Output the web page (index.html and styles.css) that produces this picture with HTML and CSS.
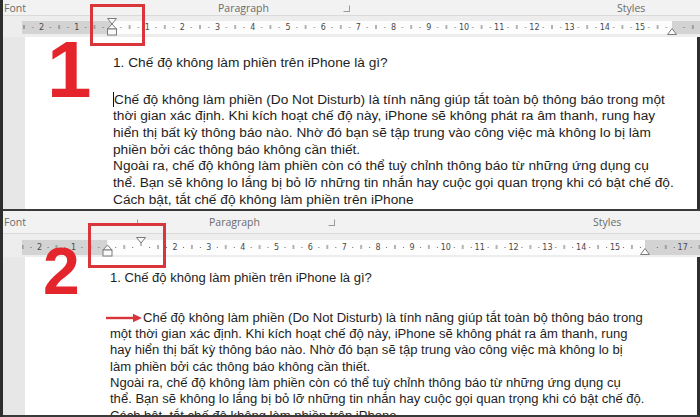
FILE: index.html
```html
<!DOCTYPE html>
<html lang="vi">
<head>
<meta charset="utf-8">
<link rel="stylesheet" href="styles.css">
</head>
<body>
<div class="shot">
  <section class="panel p1">
    <div class="ribbon r1">
      <span class="grp g-font">Font</span>
      <span class="grp g-para">Paragraph<span class="launch"></span></span>
      <span class="grp g-styles">Styles</span>
    </div>
    <div class="rulerzone z1">
      <svg class="ruler" width="700" height="21" viewBox="0 0 700 21">
        <defs>
          <pattern id="tk1" x="112" y="0" width="35.2" height="21" patternUnits="userSpaceOnUse">
            <rect x="8.3" y="11" width="1" height="1" fill="#6a6a6a"/>
            <rect x="17.1" y="9" width="1" height="4" fill="#6a6a6a"/>
            <rect x="25.9" y="11" width="1" height="1" fill="#6a6a6a"/>
          </pattern>
        </defs>
        <rect x="22" y="5" width="90" height="13" fill="#d3d3d3"/>
        <rect x="112" y="5" width="560" height="13" fill="#fdfdfd"/>
        <rect x="672" y="5" width="28" height="13" fill="#d3d3d3"/>
        <rect x="22" y="5" width="678" height="13" fill="url(#tk1)"/>
        <g class="rn" font-size="8" fill="#4a4a4a" text-anchor="middle">
          <text x="41.6" y="14">2</text><text x="76.8" y="14">1</text>
          <text x="147.2" y="14">1</text><text x="182.4" y="14">2</text><text x="217.6" y="14">3</text>
          <text x="252.8" y="14">4</text><text x="288" y="14">5</text><text x="323.2" y="14">6</text>
          <text x="358.4" y="14">7</text><text x="393.6" y="14">8</text><text x="428.8" y="14">9</text>
          <text x="464" y="14">10</text><text x="499.2" y="14">11</text><text x="534.4" y="14">12</text>
          <text x="569.6" y="14">13</text><text x="604.8" y="14">14</text><text x="640" y="14">15</text>
        </g>
        <g fill="#fafafa" stroke="#7a7a7a" stroke-width="1">
          <polygon points="107.5,2.5 116.5,2.5 112,8"/>
          <polygon points="112,8 107.5,13 116.5,13"/>
          <rect x="107.5" y="13" width="9" height="6"/>
          <polygon points="672,12.5 667.5,18.5 676.5,18.5"/>
        </g>
      </svg>
    </div>
    <div class="doc">
      <div class="page pg1">
        <div class="h">1. Chế độ không làm phiền trên iPhone là gì?</div>
        <div class="para">
          <div class="ln"><span class="caret"></span>Chế độ không làm phiền (Do Not Disturb) là tính năng giúp tắt toàn bộ thông báo trong một</div>
          <div class="ln">thời gian xác định. Khi kích hoạt chế độ này, iPhone sẽ không phát ra âm thanh, rung hay</div>
          <div class="ln">hiển thị bất kỳ thông báo nào. Nhờ đó bạn sẽ tập trung vào công việc mà không lo bị làm</div>
          <div class="ln">phiền bởi các thông báo không cần thiết.</div>
          <div class="ln">Ngoài ra, chế độ không làm phiền còn có thể tuỳ chỉnh thông báo từ những ứng dụng cụ</div>
          <div class="ln">thể. Bạn sẽ không lo lắng bị bỏ lỡ những tin nhắn hay cuộc gọi quan trọng khi có bật chế độ.</div>
          <div class="ln">Cách bật, tắt chế độ không làm phiền trên iPhone</div>
        </div>
      </div>
    </div>
    <div class="num n1">1</div>
    <div class="mark m1"></div>
  </section>

  <section class="panel p2">
    <div class="ribbon r2">
      <span class="grp g-font">Font<span class="launch"></span></span>
      <span class="grp g-para">Paragraph<span class="launch"></span></span>
      <span class="grp g-styles">Styles</span>
    </div>
    <div class="rulerzone z2">
      <svg class="ruler" width="700" height="23" viewBox="0 0 700 23">
        <defs>
          <pattern id="tk2" x="107.3" y="0" width="33.85" height="23" patternUnits="userSpaceOnUse">
            <rect x="8" y="13" width="1" height="1" fill="#6a6a6a"/>
            <rect x="16.4" y="11" width="1" height="4" fill="#6a6a6a"/>
            <rect x="24.9" y="13" width="1" height="1" fill="#6a6a6a"/>
          </pattern>
        </defs>
        <rect x="22" y="6" width="85.3" height="15" fill="#d3d3d3"/>
        <rect x="107.3" y="6" width="537.7" height="15" fill="#fdfdfd"/>
        <rect x="645" y="6" width="55" height="15" fill="#d3d3d3"/>
        <rect x="22" y="6" width="678" height="15" fill="url(#tk2)"/>
        <g class="rn" font-size="8" fill="#4a4a4a" text-anchor="middle">
          <text x="39.6" y="16">2</text><text x="73.5" y="16">1</text>
          <text x="175" y="16">2</text><text x="208.9" y="16">3</text>
          <text x="242.7" y="16">4</text><text x="276.6" y="16">5</text><text x="310.4" y="16">6</text>
          <text x="344.3" y="16">7</text><text x="378.1" y="16">8</text><text x="412" y="16">9</text>
          <text x="445.8" y="16">10</text><text x="479.7" y="16">11</text><text x="513.5" y="16">12</text>
          <text x="547.4" y="16">13</text><text x="581.2" y="16">14</text><text x="615" y="16">15</text>
          <text x="682.7" y="16">17</text>
        </g>
        <g fill="#fafafa" stroke="#7a7a7a" stroke-width="1">
          <polygon points="136.5,3.5 145.5,3.5 141,9"/>
          <line x1="141" y1="9" x2="141" y2="12"/>
          <polygon points="107.5,11 103,16 112,16"/>
          <rect x="103" y="16" width="9" height="6"/>
          <polygon points="645,14.5 640.5,20.5 649.5,20.5"/>
        </g>
      </svg>
    </div>
    <div class="doc">
      <div class="page pg2">
        <div class="h">1. Chế độ không làm phiền trên iPhone là gì?</div>
        <div class="para">
          <div class="ln first"><svg class="arrow" width="38" height="10" viewBox="0 0 38 10"><line x1="1" y1="5" x2="30" y2="5" stroke="#d9343a" stroke-width="2.4"/><polygon points="28,0.8 37,5 28,9.2" fill="#d9343a"/></svg>Chế độ không làm phiền (Do Not Disturb) là tính năng giúp tắt toàn bộ thông báo trong</div>
          <div class="ln">một thời gian xác định. Khi kích hoạt chế độ này, iPhone sẽ không phát ra âm thanh, rung</div>
          <div class="ln">hay hiển thị bất kỳ thông báo nào. Nhờ đó bạn sẽ tập trung vào công việc mà không lo bị</div>
          <div class="ln">làm phiền bởi các thông báo không cần thiết.</div>
          <div class="ln">Ngoài ra, chế độ không làm phiền còn có thể tuỳ chỉnh thông báo từ những ứng dụng cụ</div>
          <div class="ln">thể. Bạn sẽ không lo lắng bị bỏ lỡ những tin nhắn hay cuộc gọi quan trọng khi có bật chế độ.</div>
          <div class="ln">Cách bật, tắt chế độ không làm phiền trên iPhone</div>
        </div>
      </div>
    </div>
    <div class="num n2">2</div>
    <div class="mark m2"></div>
  </section>
</div>
</body>
</html>
```

FILE: styles.css
```css
html, body {
  margin: 0;
  padding: 0;
  background: #ffffff;
}
.shot {
  width: 700px;
  height: 417px;
  overflow: hidden;
  box-sizing: border-box;
  border-left: 3px solid #2e2e2e;
  display: flex;
  flex-direction: column;
}
.panel {
  position: relative;
  display: flex;
  flex-direction: column;
  overflow: hidden;
  border-bottom: 2px solid #3a3a3a;
  background: #efefef;
}
.p1 { height: 209px; }
.p2 { height: 204px; }

.ribbon {
  display: grid;
  align-items: center;
  background: #f2f2f2;
  border-bottom: 1px solid #dadada;
  font-family: "Open Sans", "DejaVu Sans", sans-serif;
  font-size: 10.5px;
  color: #6b6b6b;
  margin-left: -3px;
}
.r1 { height: 15px; grid-template-columns: 143px 209px 1fr; }
.r2 { height: 22px; grid-template-columns: 140px 200px 1fr; }
.grp {
  display: flex;
  align-items: center;
  height: 100%;
  position: relative;
}
.g-font { padding-left: 4px; }
.r1 .g-para { padding-left: 75px; }
.r2 .g-para { padding-left: 69px; }
.r1 .g-styles { padding-left: 265px; }
.r2 .g-styles { padding-left: 253px; }
.launch {
  position: absolute;
  width: 5px;
  height: 5px;
  border: 1px solid #9a9a9a;
  border-left-color: transparent;
  border-top-color: transparent;
  top: 50%;
  margin-top: -3px;
}
.r1 .g-para .launch { left: 200px; }
.r2 .g-font .launch { left: 131px; }
.r2 .g-para .launch { left: 188px; }

.rulerzone {
  background: #ededed;
  margin-left: -3px;
}
.z1 { height: 21px; }
.z2 { height: 23px; }
.ruler { display: block; }
.rn text { font-family: "DejaVu Sans", sans-serif; }

.doc {
  flex: 1;
  display: flex;
  background: #e7e7e7;
  overflow: hidden;
}
.page {
  flex: 1;
  margin-left: 22px;
  background: #ffffff;
  border-right: 3px solid #2e2e2e;
  font-family: "Liberation Sans", Arial, sans-serif;
  color: #1e1e1e;
  white-space: nowrap;
}
.pg1 {
  padding: 18px 0 0 88px;
  font-size: 13.7px;
  line-height: 16.67px;
}
.pg1 .h { margin-bottom: 20px; }
.pg2 {
  padding: 13px 0 0 85px;
  font-size: 13.05px;
  line-height: 16.3px;
}
.pg2 .h { margin-bottom: 23.5px; }
.ln { display: block; }
.caret {
  display: inline-block;
  width: 0;
  height: 15px;
  border-left: 1px solid #111;
  vertical-align: -3px;
}
.first {
  display: flex;
  align-items: center;
  margin-left: -5px;
}
.arrow {
  display: block;
  flex: none;
}

.num {
  position: absolute;
  font-family: "Liberation Sans", Arial, sans-serif;
  font-weight: bold;
  color: #e4252b;
  line-height: 0.72;
}
.n1 { left: 44px; top: 41px; font-size: 80px; }
.n2 { left: 40px; top: 37px; font-size: 66px; }
.mark {
  position: absolute;
  border: 3px solid #d9363b;
  box-sizing: border-box;
}
.m1 { left: 87px; top: 4px; width: 55px; height: 42px; }
.m2 { left: 85px; top: 12px; width: 78px; height: 45px; }
```
